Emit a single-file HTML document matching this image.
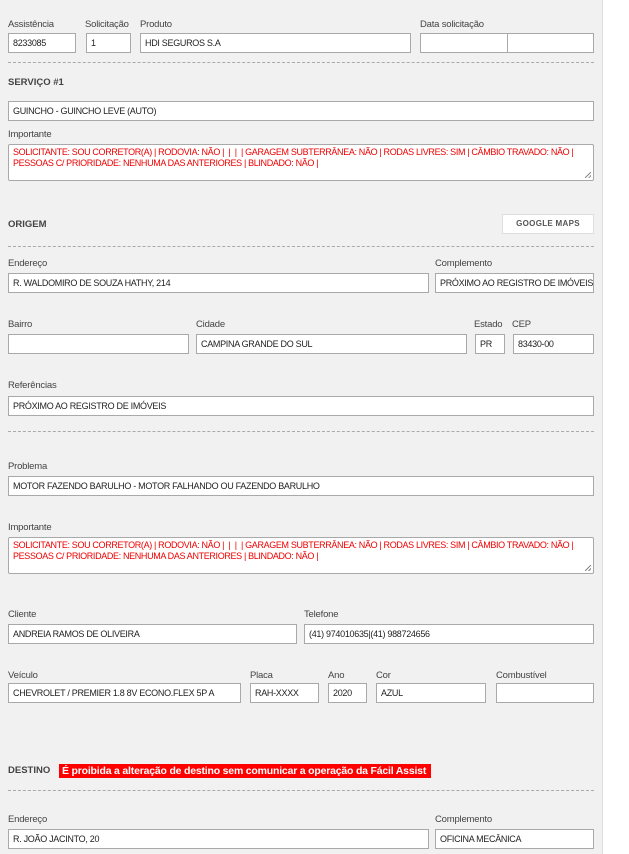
<!DOCTYPE html>
<html><head><meta charset="utf-8"><style>
*{box-sizing:border-box;margin:0;padding:0}
body{width:629px;height:854px;background:#fff;position:relative;overflow:hidden;font-family:"Liberation Sans",sans-serif;font-size:9.5px;color:#333}
#bg{position:absolute;left:0;top:0;width:603px;height:854px;background:#f1f1f1;border-right:1px solid #ddd}
.l{position:absolute;font-size:9.5px;color:#444;line-height:11px;letter-spacing:-0.2px}
.i{position:absolute;height:20px;background:#fff;border:1px solid #a9a9a9;padding:0 4px;line-height:18px;font-size:9px;color:#222;white-space:nowrap;overflow:hidden;letter-spacing:-0.3px}
.t{position:absolute;background:#fff;border:1px solid #a9a9a9;border-radius:2px;padding:2px 4px;font-size:9px;line-height:10.5px;color:#e00;white-space:nowrap;overflow:hidden;letter-spacing:-0.35px}
.d{position:absolute;left:8px;width:586px;border-top:1px dashed #aaa}
.h{position:absolute;font-family:"Liberation Sans",sans-serif;font-weight:bold;font-size:9.5px;color:#444}
.btn{position:absolute;left:502px;top:214px;width:92px;height:20px;background:#fff;border:1px solid #ddd;font-family:"Liberation Sans",sans-serif;font-weight:bold;font-size:8px;color:#555;text-align:center;line-height:18px;letter-spacing:.3px}
.rs{position:absolute;right:2px;bottom:2px;width:6px;height:6px;background:linear-gradient(135deg,transparent 45%,#888 45%,#888 55%,transparent 55%,transparent 75%,#888 75%,#888 85%,transparent 85%)}
</style></head><body>
<div id="bg"></div>

<div class="l" style="left:8px;top:19px">Assistência</div>
<div class="l" style="left:85px;top:19px">Solicitação</div>
<div class="l" style="left:140px;top:19px">Produto</div>
<div class="l" style="left:420px;top:19px">Data solicitação</div>
<div class="i" style="left:8px;top:33px;width:68px">8233085</div>
<div class="i" style="left:86px;top:33px;width:45px">1</div>
<div class="i" style="left:140px;top:33px;width:271px">HDI SEGUROS S.A</div>
<div class="i" style="left:420px;top:33px;width:88px"></div>
<div class="i" style="left:507px;top:33px;width:87px"></div>
<div class="d" style="top:62px"></div>

<div class="h" style="left:8px;top:77px">SERVIÇO #1</div>
<div class="i" style="left:8px;top:101px;width:586px">GUINCHO - GUINCHO LEVE (AUTO)</div>
<div class="l" style="left:8px;top:129px">Importante</div>
<div class="t" style="left:8px;top:144px;width:586px;height:37px">SOLICITANTE: SOU CORRETOR(A) | RODOVIA: NÃO | &nbsp;| &nbsp;| &nbsp;| GARAGEM SUBTERRÂNEA: NÃO | RODAS LIVRES: SIM | CÂMBIO TRAVADO: NÃO |<br>PESSOAS C/ PRIORIDADE: NENHUMA DAS ANTERIORES | BLINDADO: NÃO |<div class="rs"></div></div>

<div class="h" style="left:8px;top:219px">ORIGEM</div>
<div class="btn">GOOGLE MAPS</div>
<div class="d" style="top:246px"></div>
<div class="l" style="left:8px;top:258px">Endereço</div>
<div class="l" style="left:435px;top:258px">Complemento</div>
<div class="i" style="left:8px;top:273px;width:421px">R. WALDOMIRO DE SOUZA HATHY, 214</div>
<div class="i" style="left:435px;top:273px;width:159px">PRÓXIMO AO REGISTRO DE IMÓVEIS</div>
<div class="l" style="left:8px;top:319px">Bairro</div>
<div class="l" style="left:196px;top:319px">Cidade</div>
<div class="l" style="left:474px;top:319px">Estado</div>
<div class="l" style="left:512px;top:319px">CEP</div>
<div class="i" style="left:8px;top:334px;width:181px"></div>
<div class="i" style="left:196px;top:334px;width:271px">CAMPINA GRANDE DO SUL</div>
<div class="i" style="left:475px;top:334px;width:30px">PR</div>
<div class="i" style="left:513px;top:334px;width:81px">83430-00</div>
<div class="l" style="left:8px;top:380px">Referências</div>
<div class="i" style="left:8px;top:396px;width:586px">PRÓXIMO AO REGISTRO DE IMÓVEIS</div>
<div class="d" style="top:431px"></div>

<div class="l" style="left:8px;top:461px">Problema</div>
<div class="i" style="left:8px;top:476px;width:586px">MOTOR FAZENDO BARULHO - MOTOR FALHANDO OU FAZENDO BARULHO</div>
<div class="l" style="left:8px;top:522px">Importante</div>
<div class="t" style="left:8px;top:537px;width:586px;height:37px">SOLICITANTE: SOU CORRETOR(A) | RODOVIA: NÃO | &nbsp;| &nbsp;| &nbsp;| GARAGEM SUBTERRÂNEA: NÃO | RODAS LIVRES: SIM | CÂMBIO TRAVADO: NÃO |<br>PESSOAS C/ PRIORIDADE: NENHUMA DAS ANTERIORES | BLINDADO: NÃO |<div class="rs"></div></div>

<div class="l" style="left:8px;top:609px">Cliente</div>
<div class="l" style="left:304px;top:609px">Telefone</div>
<div class="i" style="left:8px;top:624px;width:289px">ANDREIA RAMOS DE OLIVEIRA</div>
<div class="i" style="left:304px;top:624px;width:290px">(41) 974010635|(41) 988724656</div>
<div class="l" style="left:8px;top:670px">Veículo</div>
<div class="l" style="left:250px;top:670px">Placa</div>
<div class="l" style="left:328px;top:670px">Ano</div>
<div class="l" style="left:376px;top:670px">Cor</div>
<div class="l" style="left:496px;top:670px">Combustível</div>
<div class="i" style="left:8px;top:683px;width:233px">CHEVROLET / PREMIER 1.8 8V ECONO.FLEX 5P A</div>
<div class="i" style="left:250px;top:683px;width:69px">RAH-XXXX</div>
<div class="i" style="left:328px;top:683px;width:39px">2020</div>
<div class="i" style="left:376px;top:683px;width:110px">AZUL</div>
<div class="i" style="left:496px;top:683px;width:98px"></div>

<div class="h" style="left:8px;top:765px">DESTINO</div>
<div style="position:absolute;left:59px;top:764px;width:372px;height:14px;background:#f00;color:#fff;font-family:'Liberation Sans',sans-serif;font-weight:bold;font-size:10.5px;line-height:14px;padding-left:3px;white-space:nowrap;letter-spacing:-0.2px;overflow:hidden">É proibida a alteração de destino sem comunicar a operação da Fácil Assist</div>
<div class="d" style="top:790px"></div>
<div class="l" style="left:8px;top:814px">Endereço</div>
<div class="l" style="left:435px;top:814px">Complemento</div>
<div class="i" style="left:8px;top:829px;width:421px">R. JOÃO JACINTO, 20</div>
<div class="i" style="left:435px;top:829px;width:159px">OFICINA MECÂNICA</div>
</body></html>
